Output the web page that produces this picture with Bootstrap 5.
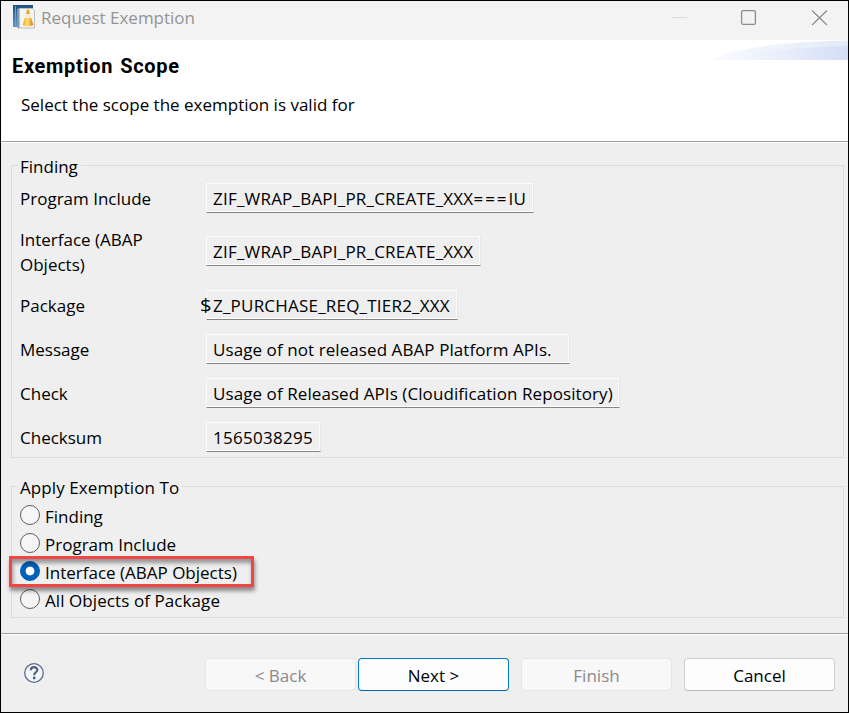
<!DOCTYPE html>
<html lang="en">
<head>
<meta charset="utf-8">
<meta name="viewport" content="width=device-width, initial-scale=1">
<title>Request Exemption</title>
<link rel="stylesheet" href="https://cdn.jsdelivr.net/npm/bootstrap@5.3.0/dist/css/bootstrap.min.css">
<style>
  body { font: 17px/25px "Open Sans", "Noto Sans", sans-serif; color: #000; background: #efefef; }
  .dialog-window { height: 713px; border: 1px solid #000; background: #efefef; }
  .title-bar { height: 39px; background: #f3f3f3; color: #949494; padding-left: 11px; }
  .caption-buttons { width: 178px; height: 39px; }
  .wizard-header { height: 103px; background: #fff; border-bottom: 1px solid #fff; box-shadow: inset 0 -1px 0 #a0a0a0; }
  .wizard-title { font: bold 20px/26px Roboto, "Liberation Sans", sans-serif; padding: 13px 0 0 11px; margin: 0; letter-spacing: .66px; word-spacing: 1.5px; }
  .wizard-text { padding: 13px 0 0 20px; margin: 0; }
  .wizard-swoosh { width: 136px; height: 20px; }
  .group-box { border: 1px solid #dcdcdc; margin: 0 4px 0 10px; padding: 0 8px; }
  .group-title { background: #efefef; margin: -12px 0 0 -2px; padding: 0 3px 0 2px; width: max-content; height: 25px; }
  .finding-group { margin-top: 22px; height: 293px; }
  .apply-group { margin-top: 28px; height: 132px; }
  .finding-rows { gap: 14px; padding-top: 4px; }
  .finding-row { display: grid; grid-template-columns: 186px max-content; align-items: center; min-height: 30px; }
  .finding-row.tall { height: 49px; }
  .finding-row.tall > span:first-child { width: 140px; }
  .finding-row.tall .value-box { margin-bottom: 2px; }
  .value-box { height: 30px; line-height: 29px; padding: 0 6px; border: 1px solid #fbfbfb; border-right-color: #e6e6e6; border-bottom-color: #858585; box-shadow: inset 0 -1px 0 #fff, inset -1px 0 0 #fbfbfb; letter-spacing: .21px; white-space: nowrap; }
  .w-include { width: 328px; } .w-iface { width: 275px; } .w-package { width: 252px; }
  .w-message { width: 364px; } .w-check { width: 414px; } .w-sum { width: 115px; }
  .w-sum { letter-spacing: .28px; }
  .prose { letter-spacing: .08px; }
  .wide-eq { letter-spacing: 2px; }
  .dollar { left: -7px; top: 0; font-size: 18px; transform: scaleX(1.12); transform-origin: left; }
  .scope-list { padding-top: 3px; }
  .scope-option { height: 28px; line-height: 28px; padding-left: 25px; white-space: nowrap; min-height: 0; margin: 0; }
  .scope-option .form-check-input { width: 20px; height: 20px; margin: 2px 0 0 -25px; border: 1px solid #5f5f5f; background-color: #f6f6f6; }
  .scope-option .form-check-input:checked { border-color: #005fb8; background: radial-gradient(circle, #fff 0 4px, #005fb8 4.8px); }
  .red-frame { left: -11px; top: -3px; width: 245px; height: 31px; border: 3px solid #f44444; box-shadow: 1px 4px 4px rgba(0,0,0,.42), inset 1px 4px 4px rgba(0,0,0,.38); pointer-events: none; }
  .button-bar { margin-top: 15px; border-top: 1px solid #a0a0a0; box-shadow: inset 0 1px 0 #fff; padding: 24px 13px 0 22px; }
  .dlg-btn { width: 151px; height: 33px; padding: 0; line-height: 33px; font-size: 17px; border-radius: 4px; background: #fdfdfd; border: 1px solid #cfcfcf; border-bottom-color: #b9b9b9; color: #000; }
  .dlg-btn.is-default { border-color: #0078d4; margin-right: 12px; margin-left: 2px; border-bottom-color: #0067b8; }
  .dlg-btn:disabled { background: #f8f8f8; border-color: #e6e6e6; color: #8a8a8a; opacity: 1; }
</style>
</head>
<body class="overflow-hidden">
<main class="dialog-window overflow-hidden">
  <header class="title-bar d-flex align-items-start">
    <svg width="25" height="27" viewBox="0 0 25 27" class="flex-shrink-0 mt-1">
      <defs>
        <linearGradient id="cover" x2="0" y2="1"><stop stop-color="#1d4d82"/><stop offset="1" stop-color="#5f9bd0"/></linearGradient>
        <linearGradient id="cone"><stop stop-color="#eda51c"/><stop offset=".45" stop-color="#ffe070"/><stop offset="1" stop-color="#cf8110"/></linearGradient>
      </defs>
      <path d="M1 0h20v6H7v17l-1-1H1z" fill="url(#cover)"/>
      <path d="M3.500 1v20" stroke="#6f9fcb"/>
      <path d="M5 4l2-1v21l-2-2z" fill="#8098b0"/>
      <path d="M7.500 3.500h13l2 2v17.500h-15z" fill="#f4f4f0" stroke="#bdbdbd"/>
      <path d="M15 4.500h2l1 4.500h-4z" fill="#e8aa2c"/>
      <path d="M13.800 9.500h4.400l1 3.500h-6.400z" fill="#f3ead0"/>
      <path d="M12.700 13h6.600l2 7q-5.300 2.400-10.600 0z" fill="url(#cone)"/>
    </svg>
    <span class="ms-1 pt-1 flex-grow-1">Request Exemption</span>
    <svg class="caption-buttons flex-shrink-0" viewBox="670 1 178 39" fill="none">
      <path d="M672 17.500h15" stroke="#dcdcdc"/>
      <rect x="741.600" y="10.600" width="13.800" height="13.800" rx="1.500" stroke="#8c8c8c" stroke-width="1.300"/>
      <path d="M812 10.500l15 14.500M827 10.500l-15 14.500" stroke="#8c8c8c" stroke-width="1.200"/>
    </svg>
  </header>

  <section class="wizard-header d-flex justify-content-between align-items-start">
    <div>
      <h1 class="wizard-title">Exemption Scope</h1>
      <p class="wizard-text">Select the scope the exemption is valid for</p>
    </div>
    <svg class="wizard-swoosh" viewBox="0 0 136 20">
      <defs>
        <linearGradient id="sw"><stop stop-color="#f8faff"/><stop offset="1" stop-color="#e2eaf8"/></linearGradient>
        <linearGradient id="sw2"><stop stop-color="#fafbff"/><stop offset=".5" stop-color="#e9eefb"/><stop offset="1" stop-color="#d3ddf6"/></linearGradient>
      </defs>
      <path d="M0 20Q30 3 136 .5V20z" fill="url(#sw)"/>
      <path d="M6 20Q45 9 136 6V20z" fill="url(#sw2)"/>
    </svg>
  </section>

  <section class="group-box finding-group">
    <div class="group-title">Finding</div>
    <div class="finding-rows d-flex flex-column">
      <div class="finding-row"><span>Program Include</span><div class="value-box w-include">ZIF_WRAP_BAPI_PR_CREATE_XXX<span class="wide-eq">===</span>IU</div></div>
      <div class="finding-row tall"><span>Interface (ABAP Objects)</span><div class="value-box w-iface">ZIF_WRAP_BAPI_PR_CREATE_XXX</div></div>
      <div class="finding-row"><span>Package</span><div class="value-box w-package position-relative"><span class="dollar position-absolute">$</span>Z_PURCHASE_REQ_TIER2_XXX</div></div>
      <div class="finding-row"><span>Message</span><div class="value-box w-message prose">Usage of not released ABAP Platform APIs.</div></div>
      <div class="finding-row"><span>Check</span><div class="value-box w-check prose">Usage of Released APIs (Cloudification Repository)</div></div>
      <div class="finding-row"><span>Checksum</span><div class="value-box w-sum">1565038295</div></div>
    </div>
  </section>

  <section class="group-box apply-group">
    <div class="group-title prose">Apply Exemption To</div>
    <div class="scope-list">
      <div class="form-check scope-option"><input class="form-check-input" type="radio" name="scope" id="s1"><label for="s1">Finding</label></div>
      <div class="form-check scope-option"><input class="form-check-input" type="radio" name="scope" id="s2"><label for="s2">Program Include</label></div>
      <div class="form-check scope-option position-relative"><input class="form-check-input" type="radio" name="scope" id="s3" checked><label for="s3">Interface (ABAP Objects)</label><span class="red-frame position-absolute"></span></div>
      <div class="form-check scope-option prose"><input class="form-check-input" type="radio" name="scope" id="s4"><label for="s4">All Objects of Package</label></div>
    </div>
  </section>

  <footer class="button-bar d-flex align-items-start">
    <svg width="22" height="22" viewBox="0 0 22 22" fill="none" class="me-auto mt-1" role="img" aria-label="Help">
      <circle cx="11" cy="11" r="9.300" fill="#f4f5f8" stroke="#5a6c8c" stroke-width="1.300"/>
      <path d="M7.800 8.300C7.800 4.200 14.300 4.200 14.300 7.900C14.300 10.300 11.200 10.300 11.200 13.300" stroke="#4d6084" stroke-width="2.200"/>
      <circle cx="11.200" cy="16" r="1.400" fill="#4d6084"/>
    </svg>
    <button class="btn dlg-btn" disabled>&lt; Back</button>
    <button class="btn dlg-btn is-default">Next &gt;</button>
    <button class="btn dlg-btn me-2" disabled>Finish</button>
    <button class="btn dlg-btn ms-1">Cancel</button>
  </footer>
</main>
<script src="https://cdn.jsdelivr.net/npm/bootstrap@5.3.0/dist/js/bootstrap.bundle.min.js"></script>
</body>
</html>
